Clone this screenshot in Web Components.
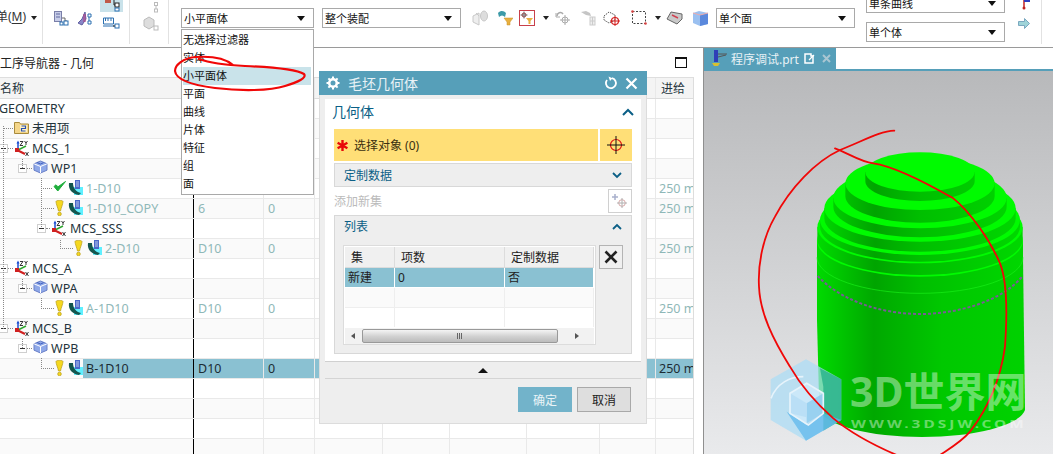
<!DOCTYPE html>
<html lang="zh">
<head>
<meta charset="utf-8">
<title>NX</title>
<style>
  html, body { margin: 0; padding: 0; background: #fff; overflow: hidden; }
  body { font-family: "Noto Sans", "Noto Sans CJK SC", sans-serif; font-size: 12px; }
</style>
</head>
<body>
<nx-app>
  <nx-toolbar slot="toolbar"></nx-toolbar>
  <nav-tree slot="left"></nav-tree>
  <graphics-view slot="right"></graphics-view>
  <filter-menu slot="over"></filter-menu>
  <blank-dialog slot="over"></blank-dialog>
</nx-app>

<script>
const FONT = '"Noto Sans", "Noto Sans CJK SC", sans-serif';

// tree icons
const ICONS = {
  folder: `<svg width="15" height="14" viewBox="0 0 15 14"><path d="M.5 2.500h5l1 1.500h8v9.500H.5z" fill="#f4d68a" stroke="#a98b3c"/><rect x="6" y="5" width="7" height="7" fill="#fff3c4"/><path d="M7.500 6h4v2.500h-4V11h4" fill="none" stroke="#2a4fb0" stroke-width="1.200"/></svg>`,
  mcs: `<svg width="16" height="17" viewBox="0 0 16 17"><path d="M4 11V2" stroke="#1c4fd0" stroke-width="1.500"/><path d="M2.500 3.500 4 .5l1.500 3z" fill="#1c4fd0"/><path d="M4 10l8-4" stroke="#2fa52f" stroke-width="1.500"/><path d="M3 10l8 4" stroke="#d02020" stroke-width="2"/><rect x="1" y="8" width="4" height="4" fill="#d02020"/><path d="M6 1.500h3l-3 4h3M10.500 1l1.500 2 1.500-2M12 3v2M11.500 12l3 4M14.500 12l-3 4" fill="none" stroke="#222" stroke-width=".9"/></svg>`,
  wp: `<svg width="15" height="14" viewBox="0 0 15 14"><path d="M7.500 1 14 3.800v6.400L7.500 13 1 10.200V3.800z" fill="#8fa8e8" stroke="#6a80c8"/><path d="M1 3.800 7.500 6.500 14 3.800M7.500 6.500V13" fill="none" stroke="#fff"/><path d="M4 2.500l3.500 1.500 3-1.300" fill="none" stroke="#3f5fc0"/></svg>`,
  op: `<svg width="15" height="16" viewBox="0 0 15 16"><rect x="6" y="7" width="9" height="8" fill="#5ff0ff"/><rect x="7" y="0" width="5" height="9" fill="#4a66c8"/><path d="M8 2h3M8 4h3M8 6h3" stroke="#b8c8f0"/><path d="M1 3c-1 6 3 11 10 12l2-2C8 12 5 8 5 3z" fill="#14564e"/></svg>`,
  ok: `<svg width="13" height="12" viewBox="0 0 13 12"><path d="M1 6.500 4.800 11 12.500 1.500 5 6.800 3 4.800z" fill="#1fae3c" stroke="#1fae3c"/></svg>`,
  warn: `<svg width="9" height="16" viewBox="0 0 9 16"><path d="M1 1.500C1 0 8 0 8 1.500 8 4 6 8 5.500 11h-2C3 8 1 4 1 1.500z" fill="#f5d820" stroke="#b89b10" stroke-width=".7"/><circle cx="4.500" cy="14" r="1.800" fill="#f5d820" stroke="#b89b10" stroke-width=".7"/></svg>`
};

class NxApp extends HTMLElement {
  constructor() {
    super();
    this.attachShadow({ mode: 'open' });
  }

  connectedCallback() {
    this.shadowRoot.innerHTML = `
      <style>
        :host { display: block; position: relative; width: 1053px; height: 454px; overflow: hidden;
                font-family: ${FONT}; font-size: 12px; color: #222; }
        .main { display: flex; height: 406px; }
        .left { width: 703px; flex: none; }
        .right { flex: 1; min-width: 0; }
        .marks { position: absolute; left: 0; top: 0; pointer-events: none; }
      </style>
      <slot name="toolbar"></slot>
      <div class="main">
        <div class="left"><slot name="left"></slot></div>
        <div class="right"><slot name="right"></slot></div>
      </div>
      <slot name="over"></slot>
      <svg class="marks" width="1053" height="454" fill="none" stroke="#f00707" stroke-width="2.200" stroke-linecap="round">
        <path d="M233 65C226 59 212 56 196 57 183 58 175 65 175 71 176 80 192 85 215 88 240 91 270 91 285 86 298 82 307 78 304 74 296 69 268 67 245 66 226 65 210 63 199 59"/>
      </svg>
    `;
  }
}

class NxCombo extends HTMLElement {
  constructor() {
    super();
    this.attachShadow({ mode: 'open' });
    this.shadowRoot.innerHTML = `
      <style>
        :host { display: flex; align-items: center; box-sizing: border-box; width: 139px; height: 20px; flex: none;
                border: 1px solid #a9a9a9; background: #fff; padding: 0 8px 0 2px; font-size: 11px; color: #111; }
        .t { flex: 1; white-space: nowrap; }
        .a { width: 0; height: 0; border: 4px solid transparent; border-top: 5px solid #111; border-bottom: 0; }
      </style>
      <span class="t"><slot></slot></span><span class="a"></span>
    `;
  }
}

class NxToolbar extends HTMLElement {
  constructor() {
    super();
    this.attachShadow({ mode: 'open' });
  }

  connectedCallback() {
    const arrow = ml => `<span class="arr" style="margin-left:${ml}px"></span>`;
    const sep = (ml, mr) => `<span class="sep" style="margin:0 ${mr}px 0 ${ml}px"></span>`;
    this.shadowRoot.innerHTML = `
      <style>
        :host { display: flex; box-sizing: border-box; height: 48px; border-bottom: 1px solid #9a9a9a;
                background: #fff; overflow: hidden; align-items: flex-start; font-size: 12px; color: #333; }
        .menu { margin: 8px 0 0 -4px; white-space: nowrap; line-height: 18px; }
        .menu u { text-underline-offset: 2px; }
        .arr { flex: none; width: 0; height: 0; margin-top: 16px; border: 3px solid transparent; border-top: 4px solid #222; border-bottom: 0; }
        .sep { flex: none; width: 1px; height: 44px; background: #e2e2e2; }
        svg { flex: none; display: block; }
        .i { margin-top: 10px; }
        .stack { flex: none; display: flex; flex-direction: column; }
        .hi { width: 23px; height: 12px; background: #c9e2ea; overflow: hidden; }
        nx-combo { margin-top: 8px; }
        .combos { flex: none; display: flex; flex-direction: column; gap: 9px; margin: -7px 0 0 11px; }
        .combos nx-combo { margin: 0; }
      </style>
      <span class="menu">单(<u>M</u>)</span>
      ${arrow(5)}
      ${sep(5, 11)}
      <svg class="i" style="margin-top:11px" width="16" height="15" viewBox="0 0 16 15"><rect x=".5" y=".5" width="7" height="10" fill="#c7cde8" stroke="#7a7fa8"/><path d="M2 3h4M2 6h4" stroke="#6068a0"/><path d="M8 7h3v3h2" stroke="#666" fill="none"/><rect x="10" y="10" width="4" height="4" fill="#fff" stroke="#2a6fb0"/><rect x="6" y="11" width="3" height="3" fill="#fff" stroke="#2a6fb0"/></svg>
      <svg class="i" style="margin:11px 0 0 7px" width="17" height="15" viewBox="0 0 17 15"><path d="M1 12 5 8l3-7 1 7-4 6z" fill="#8a86c8" stroke="#6060a0"/><path d="M6 3h3v8H6z" fill="#b04a8a" opacity=".6"/><path d="M11 3h3v3h-3zM11 10h3v3h-3zM12 6v4" fill="#fff" stroke="#2a6fb0"/></svg>
      <div class="stack" style="margin-left:6px;width:23px">
        <div class="hi"><svg width="23" height="12" viewBox="0 0 23 12"><rect x="5" y="-5" width="6" height="8" fill="#c05a4a"/><path d="M14 -1v6h3" stroke="#222" fill="none"/><rect x="15" y="3" width="4" height="4" fill="#fff" stroke="#222"/><rect x="15" y="8" width="4" height="3" fill="#fff" stroke="#2a6fb0"/></svg></div>
        <svg style="margin:3px 0 0 3px" width="17" height="15" viewBox="0 0 17 15"><path d="M.5 3v6h10V3" fill="none" stroke="#2a6fb0"/><path d="M.5 3h10M2.500 3v3M5 3v3M8 3v3M0 11h11" stroke="#2a6fb0" fill="none"/><rect x="12" y="9" width="4" height="4" fill="#fff" stroke="#2a6fb0"/><path d="M10 11h2" stroke="#222"/></svg>
      </div>
      ${sep(6, 11)}
      <div class="stack" style="width:18px;height:46px">
        <svg style="margin:2px 0 0 13px" width="5" height="11" viewBox="0 0 5 11"><rect x=".5" y=".5" width="3" height="3" fill="#fff" stroke="#bbb"/><rect x=".5" y="7" width="3" height="3" fill="#fff" stroke="#bbb"/><path d="M2 4v3" stroke="#bbb"/></svg>
        <svg style="margin:2px 0 0 2px" width="16" height="16" viewBox="0 0 16 16"><path d="M1 5l5-3 5 3v6l-5 3-5-3z" fill="#ddd" stroke="#bbb"/><rect x="11" y="11" width="4" height="4" fill="#fff" stroke="#bbb"/></svg>
      </div>
      ${sep(9, 12)}
      <nx-combo style="width:133px">小平面体</nx-combo>
      <nx-combo style="margin-left:8px">整个装配</nx-combo>
      <svg class="i" style="margin-left:11px" width="16" height="17" viewBox="0 0 16 17"><path d="M1 6l6-3v12l-6-3zM7 6l-3-3" fill="#eee" stroke="#c8c8c8"/><ellipse cx="12" cy="6" rx="3.500" ry="5" fill="#ddd" stroke="#c8c8c8"/></svg>
      <svg class="i" style="margin-left:9px" width="16" height="16" viewBox="0 0 16 16"><path d="M1 3c3-3 6-2 8 0l-1 4C6 5 4 5 2 7z" fill="#3d9aa8"/><path d="M7 8h9l-3 4v3h-3v-3z" fill="#e8b040" stroke="#c8902a" stroke-width=".5"/></svg>
      <svg class="i" style="margin-left:6px" width="16" height="16" viewBox="0 0 16 16"><rect x=".5" y=".5" width="15" height="15" fill="#fff" stroke="#c8404a"/><circle cx="5" cy="5" r="2" fill="none" stroke="#a04040"/><path d="M5 1.500v7M1.500 5h7" stroke="#555" stroke-width=".8"/><path d="M7 8h7l-2.500 3v3h-2v-3z" fill="#e8b040"/></svg>
      ${arrow(8)}
      <svg class="i" style="margin-left:6px" width="16" height="16" viewBox="0 0 16 16"><path d="M2 6c0-3 4-5 6-2" fill="none" stroke="#aaa" stroke-width="1.500"/><path d="M1 3v4h4" fill="none" stroke="#aaa"/><circle cx="10" cy="10" r="3" fill="none" stroke="#aaa"/><path d="M10 5v10M5 10h10" stroke="#aaa"/></svg>
      <svg class="i" style="margin-left:9px" width="17" height="16" viewBox="0 0 17 16"><path d="M1 2l5-1 4 2 1 3-5-1z" fill="#c5c5c5"/><rect x="10" y="7" width="5" height="8" fill="#eee" stroke="#ccc"/><path d="M10 11h5M12.500 7v8" stroke="#ccc"/></svg>
      <svg class="i" style="margin-left:6px" width="18" height="17" viewBox="0 0 18 17"><path d="M1 6l5-4 6 3v5l-6 3-5-3z" fill="#fff" stroke="#555" stroke-dasharray="1.500 1"/><circle cx="12" cy="11" r="3.500" fill="none" stroke="#d42020" stroke-width="1.200"/><path d="M12 6v10M7 11h10" stroke="#d42020"/></svg>
      <svg class="i" style="margin-left:10px" width="16" height="16" viewBox="0 0 16 16"><rect x="1.500" y="1.500" width="13" height="12" fill="none" stroke="#444" stroke-dasharray="2 1.500"/><circle cx="1.500" cy="1.500" r="1.300" fill="#d84040"/><circle cx="14.500" cy="13.500" r="1.300" fill="#d84040"/></svg>
      ${arrow(8)}
      <svg class="i" style="margin-left:5px" width="17" height="15" viewBox="0 0 17 15"><path d="M1 9l4-7 11 2v5l-5 5z" fill="#c9c9c9" stroke="#666"/><path d="M6 5l6 3" stroke="#d04050" stroke-width="1.500"/></svg>
      <svg class="i" style="margin-left:9px" width="17" height="16" viewBox="0 0 17 16"><path d="M1 3l6-2 9 2v11l-8 2-7-3z" fill="#9bc0f0"/><path d="M8 5l8-2v11l-8 2z" fill="#5a88dc"/><path d="M1 3l7 2 8-2" fill="none" stroke="#eaa"/></svg>
      <nx-combo style="margin-left:7px">单个面</nx-combo>
      <div class="combos">
        <nx-combo>单条曲线</nx-combo>
        <nx-combo>单个体</nx-combo>
      </div>
      <div class="stack" style="margin-left:13px;width:12px">
        <svg style="margin-top:-1px;margin-left:4px" width="8" height="11" viewBox="0 0 8 11"><path d="M2 0v9" stroke="#c02020" stroke-width="1.500"/><path d="M2 0h6v3H2z" fill="#2f3fc0"/><circle cx="2" cy="9" r="1.500" fill="#c02020"/></svg>
        <svg style="margin-top:8px" width="12" height="11" viewBox="0 0 12 11"><path d="M.5 3.500h6V.5l5 5-5 5v-3h-6z" fill="#9fd4d8" stroke="#7aa8c0"/></svg>
      </div>
      <span class="sep" style="margin-left:11px"></span>
    `;
  }
}

class NavTree extends HTMLElement {
  constructor() {
    super();
    this.attachShadow({ mode: 'open' });
  }

  connectedCallback() {
    const rows = [
      { t: 'GEOMETRY', x: -1 },
      { t: '未用项', x: 32, icon: 'folder', ix: 14 },
      { t: 'MCS_1', x: 32, icon: 'mcs', ix: 14, ex: -1 },
      { t: 'WP1', x: 51, icon: 'wp', ix: 33, ex: 18 },
      { t: '1-D10', x: 86, icon: 'op', ix: 68, st: 'ok', sx: 53, dim: 1, feed: 1 },
      { t: '1-D10_COPY', x: 86, icon: 'op', ix: 68, st: 'warn', sx: 55, dim: 1, a: '6', b: '0', feed: 1 },
      { t: 'MCS_SSS', x: 70, icon: 'mcs', ix: 51, ex: 37 },
      { t: '2-D10', x: 105, icon: 'op', ix: 87, st: 'warn', sx: 74, dim: 1, a: 'D10', b: '0', feed: 1 },
      { t: 'MCS_A', x: 32, icon: 'mcs', ix: 14, ex: -1 },
      { t: 'WPA', x: 51, icon: 'wp', ix: 33, ex: 18 },
      { t: 'A-1D10', x: 86, icon: 'op', ix: 68, st: 'warn', sx: 55, dim: 1, a: 'D10', b: '0', feed: 1 },
      { t: 'MCS_B', x: 32, icon: 'mcs', ix: 14, ex: -1 },
      { t: 'WPB', x: 51, icon: 'wp', ix: 33, ex: 18 },
      { t: 'B-1D10', x: 86, icon: 'op', ix: 68, st: 'warn', sx: 55, sel: 1, a: 'D10', b: '0', feed: 1 }
    ];
    while (rows.length < 18) rows.push({});

    const name = r => {
      if (!r.t) return '';
      let h = '';
      if (r.ex !== undefined) h += `<span class="ex" style="left:${r.ex}px"></span><span class="dh" style="left:${r.ex + 9}px;width:${r.ix - r.ex - 10}px"></span>`;
      if (r.st) {
        h += `<span class="dh" style="left:${r.sx - 12}px;width:11px"></span><span class="ic" style="left:${r.sx}px">${ICONS[r.st]}</span>`;
      } else if (r.t === '未用项') {
        h += `<span class="dh" style="left:3px;width:10px"></span>`;
      }
      if (r.icon) h += `<span class="ic" style="left:${r.ix}px">${ICONS[r.icon]}</span>`;
      h += `<span class="lbl" style="left:${r.x}px">${r.t}</span>`;
      return h;
    };

    const body = rows.map((r, i) => `
      <div class="row${i % 2 ? ' alt' : ''}${r.sel ? ' sel' : ''}${r.dim ? ' dim' : ''}">
        <div class="c name">${name(r)}</div>
        <div class="c">${r.a || ''}</div>
        <div class="c">${r.b || ''}</div>
        <div class="c"></div><div class="c"></div><div class="c"></div><div class="c"></div><div class="c"></div>
        <div class="c feed">${r.feed ? '250 m' : ''}</div>
      </div>`).join('');

    this.shadowRoot.innerHTML = `
      <style>
        :host { display: block; height: 406px; overflow: hidden; background: #fff; font-size: 12px; }
        .title { display: flex; align-items: center; justify-content: space-between; height: 29px;
                 padding-right: 16px; color: #222; }
        .win { width: 10px; height: 8px; border: 1px solid #111; border-top-width: 2px; }
        .grid { position: relative; width: 693px; border-right: 1px solid #ddd; }
        .row { display: grid; height: 20px; box-sizing: border-box; border-bottom: 1px solid #e9e9e9; line-height: 19px; font-size: 12.500px;
               grid-template-columns: 194px 70px 51px 68px 67px 77px 73px 56px 37px; background: #fff; color: #24343c; }
        .row.alt { background: #fafafa; }
        .row.head { height: 22px; line-height: 21px; font-size: 12px; background: #f4f4f4; border-top: 1px solid #dedede; border-bottom: 1px solid #dcdcdc; }
        .row.dim { color: #8fb8b8; }
        .row.sel .c { background: #8ac1d2; color: #1c2c34; }
        .row.sel .name { background: linear-gradient(90deg, transparent 83px, #8ac1d2 83px); }
        .c { position: relative; box-sizing: border-box; border-right: 1px solid #e9e9e9; padding-left: 4px; white-space: nowrap; overflow: hidden; }
        .name { border-right: 1px solid #000; padding: 0; overflow: visible; }
        .feed { padding-left: 3px; border-right: 0; }
        .row.sel .feed { border: 0; }
        .lbl { position: absolute; top: 0; white-space: nowrap; }
        .ic { position: absolute; top: 1px; line-height: 0; }
        .ex { position: absolute; top: 5px; width: 9px; height: 9px; box-sizing: border-box; border: 1px solid #cfcfcf;
              background: linear-gradient(#333, #333) center / 5px 1px no-repeat #fff; }
        .dh { position: absolute; top: 9px; border-top: 1px dotted #888; }
        .lines { position: absolute; left: 0; top: 0; pointer-events: none; }
      </style>
      <div class="title"><span>工序导航器 - 几何</span><span class="win"></span></div>
      <div class="grid">
        <div class="row head">
          <div class="c name"><span class="lbl" style="left:0">名称</span></div>
          <div class="c"></div><div class="c"></div><div class="c"></div><div class="c"></div><div class="c"></div><div class="c"></div><div class="c"></div>
          <div class="c feed" style="padding-left:5px">进给</div>
        </div>
        ${body}
        <svg class="lines" width="193" height="300" fill="none" stroke="#888" stroke-dasharray="1 1">
          <path d="M3.500 49V252M22.500 82V92M22.500 202V212M22.500 262V272M41.500 101V151M60.500 163V172M41.500 221V232M41.500 281V292"/>
        </svg>
      </div>
    `;
  }
}

class FilterMenu extends HTMLElement {
  constructor() {
    super();
    this.attachShadow({ mode: 'open' });
    const items = ['无选择过滤器', '实体', '小平面体', '平面', '曲线', '片体', '特征', '组', '面'];
    this.shadowRoot.innerHTML = `
      <style>
        :host { display: block; position: absolute; left: 181px; top: 29px; width: 133px; box-sizing: border-box;
                height: 166px; border: 1px solid #a9a9a9; background: #fff; padding: 1px; font-size: 11px; color: #111; }
        div { height: 18px; line-height: 18px; padding-left: 0; white-space: nowrap; }
        .on { background: #c9e3ea; margin-right: 1px; }
      </style>
      ${items.map(t => `<div class="${t === '小平面体' ? 'on' : ''}">${t}</div>`).join('')}
    `;
  }
}

class BlankDialog extends HTMLElement {
  constructor() {
    super();
    this.attachShadow({ mode: 'open' });
    const tr = (a, b, c, cls) => `<div class="tr ${cls}"><span>${a}</span><span>${b}</span><span>${c}</span></div>`;
    this.shadowRoot.innerHTML = `
      <style>
        :host { display: block; position: absolute; left: 319px; top: 71px; width: 328px; height: 353px; box-sizing: border-box;
                background: #eee; border: 1px solid #dcdcdc; border-top: 0; font-size: 12px; color: #222; }
        .bar { display: flex; align-items: center; height: 24px; margin: 0 -1px; background: #569fb9; color: #e8f2f6; font-size: 14px; padding: 0 9px 0 7px; }
        .bar .name { flex: 1; margin-left: 8px; }
        .bar svg { display: block; }
        .body { box-sizing: border-box; height: 263px; margin: 4px 5px 0; background: #fff; padding: 0 9px; border-bottom: 1px solid #d0d0d0; }
        .h1 { display: flex; align-items: center; justify-content: space-between; height: 26px; line-height: 24px; color: #0b5f86; font-size: 14px; margin: 0 -2px 4px -2px; }
        .sel { display: flex; gap: 2px; height: 32px; }
        .sel .f { flex: 1; display: flex; align-items: center; background: #ffdf77; padding-left: 3px; color: #3a3010; }
        .sel .b { width: 32px; display: flex; align-items: center; justify-content: center; background: #ffdf77; }
        .sel .f svg { margin-right: 6px; display: block; }
        .group { display: flex; align-items: center; justify-content: space-between; height: 24px; box-sizing: border-box; margin-top: 2px;
                 background: #eee; border: 1px solid #d8d8d8; padding: 0 9px; color: #0b5f86; }
        .add { display: flex; align-items: center; justify-content: space-between; height: 24px; margin-top: 2px; color: #bbb; }
        .add .b { width: 24px; height: 24px; box-sizing: border-box; border: 1px solid #d0d0d0; display: flex; align-items: center; justify-content: center; }
        .list { box-sizing: border-box; height: 139px; margin-top: 2px; background: #eee; border: 1px solid #d8d8d8; padding: 0 8px; }
        .list .head { display: flex; align-items: center; justify-content: space-between; height: 20px; color: #0b5f86; padding: 0 1px; }
        .wrap { display: flex; gap: 3px; margin-top: 9px; align-items: flex-start; }
        .table { box-sizing: border-box; width: 253px; height: 100px; border: 1px solid #dcdcdc; background: #fff; padding: 1px; }
        .tr { display: grid; grid-template-columns: 50px 110px 1fr; height: 20px; line-height: 19px; background: #fff; border-bottom: 1px solid #eee; box-sizing: border-box; }
        .tr span { border-right: 1px solid #eee; padding-left: 3px; }
        .tr.th { height: 21px; line-height: 21px; background: #f0f0f0; border-bottom: 1px solid #dcdcdc; }
        .tr.th span { padding-left: 6px; border-right: 1px solid #dcdcdc; }
        .tr.on { background: #8ac1d2; border-bottom: 1px solid #fff; }
        .tr.on span { border-right: 1px solid #fff; }
        .tr.alt { background: #fafafa; }
        .tr.last { height: 19px; border: 0; }
        .scroll { display: flex; align-items: center; height: 16px; background: #f2f2f2; margin-top: 1px; }
        .scroll .l, .scroll .r { width: 0; height: 0; border: 3.500px solid transparent; }
        .scroll .l { border-right: 4px solid #555; margin-left: 3px; }
        .scroll .r { border-left: 4px solid #555; margin-left: 17px; }
        .scroll .thumb { width: 196px; height: 14px; box-sizing: border-box; margin-left: 7px; border: 1px solid #999; border-radius: 2px;
                         background: linear-gradient(#f4f4f4, #d0d0d0 55%, #bcbcbc); display: flex; align-items: center; justify-content: center; }
        .scroll .grip { width: 6px; height: 6px; background: repeating-linear-gradient(90deg, #666 0 1px, transparent 1px 2px); }
        .x { width: 24px; height: 24px; box-sizing: border-box; border: 1px solid #b4b4b4; display: flex; align-items: center; justify-content: center; background: #f0f0f0; }
        .toggle { display: flex; align-items: center; justify-content: center; height: 16px; margin: 0 5px; border-bottom: 1px solid #d4d4d4; }
        .toggle i { width: 0; height: 0; border: 5px solid transparent; border-bottom: 5px solid #111; border-top: 0; }
        .foot { display: flex; justify-content: flex-end; gap: 5px; padding: 8px 15px 0 0; }
        .btn { box-sizing: border-box; width: 54px; height: 25px; display: flex; align-items: center; justify-content: center; }
        .ok { background: #72b3ca; color: #eaf4f7; }
        .cancel { background: #dedede; border: 1px solid #a9a9a9; color: #222; }
      </style>
      <div class="bar">
        <svg width="14" height="14" viewBox="0 0 14 14"><circle cx="7" cy="7" r="3.800" fill="none" stroke="#fff" stroke-width="2.600"/><path d="M7 .5v2.500M7 11v2.500M.5 7H3M11 7h2.500M2.400 2.400l1.800 1.800M9.800 9.800l1.800 1.800M11.600 2.400 9.800 4.200M4.200 9.800l-1.800 1.800" stroke="#fff" stroke-width="2"/></svg>
        <span class="name">毛坯几何体</span>
        <svg width="14" height="14" viewBox="0 0 14 14" style="margin-right:7px"><path d="M8 2.200A5 5 0 1 1 3 4" fill="none" stroke="#fff" stroke-width="1.800"/><path d="M4.500 .5 8.500 2.200 6 5z" fill="#fff"/></svg>
        <svg width="13" height="13" viewBox="0 0 13 13"><path d="M1.500 1.500l10 10M11.500 1.500l-10 10" stroke="#fff" stroke-width="2.200"/></svg>
      </div>
      <div class="body">
        <div class="h1"><span>几何体</span><svg width="12" height="8" viewBox="0 0 12 8"><path d="M1 7l5-5 5 5" fill="none" stroke="#0b5f86" stroke-width="2"/></svg></div>
        <div class="sel">
          <div class="f"><svg width="11" height="11" viewBox="0 0 11 11"><path d="M5.500 0v11M.6 2.700l9.800 5.600M10.400 2.700.6 8.300" stroke="#e80808" stroke-width="2.400"/></svg>选择对象 (0)</div>
          <div class="b"><svg width="20" height="20" viewBox="0 0 20 20"><circle cx="10" cy="10" r="5.500" fill="none" stroke="#e01010" stroke-width="1.200"/><path d="M10 1v18M1 10h18" stroke="#111"/></svg></div>
        </div>
        <div class="group"><span>定制数据</span><svg width="10" height="7" viewBox="0 0 10 7"><path d="M1 1l4 4 4-4" fill="none" stroke="#0b5f86" stroke-width="1.800"/></svg></div>
        <div class="add"><span>添加新集</span><span class="b"><svg width="16" height="16" viewBox="0 0 16 16"><path d="M3 1v6M0 4h6" stroke="#a8b0cc" stroke-width="1.500"/><circle cx="10" cy="10" r="3.300" fill="none" stroke="#d8a8a8"/><path d="M10 5v10M5 10h10" stroke="#b0b0b0"/></svg></span></div>
        <div class="list">
          <div class="head"><span>列表</span><svg width="10" height="7" viewBox="0 0 10 7"><path d="M1 6l4-4 4 4" fill="none" stroke="#0b5f86" stroke-width="1.800"/></svg></div>
          <div class="wrap">
            <div class="table">
              ${tr('集', '项数', '定制数据', 'th')}
              ${tr('新建', '0', '否', 'on')}
              ${tr('', '', '', 'alt')}
              ${tr('', '', '', 'last')}
              <div class="scroll"><span class="l"></span><span class="thumb"><span class="grip"></span></span><span class="r"></span></div>
            </div>
            <span class="x"><svg width="14" height="14" viewBox="0 0 14 14"><path d="M1.500 1.500l11 11M12.500 1.500l-11 11" stroke="#222" stroke-width="2.600"/></svg></span>
          </div>
        </div>
      </div>
      <div class="toggle"><i></i></div>
      <div class="foot"><span class="btn ok">确定</span><span class="btn cancel">取消</span></div>
    `;
  }
}

class GraphicsView extends HTMLElement {
  constructor() {
    super();
    this.attachShadow({ mode: 'open' });
  }

  tier(rx, cy, ry, h) {
    const cx = 540;
    return `<path d="M${cx - rx} ${cy}v${h}a${rx} ${ry} 0 0 0 ${rx * 2} 0v${-h}z" fill="url(#side)"/>
      <ellipse cx="${cx}" cy="${cy}" rx="${rx}" ry="${ry}" fill="#00fb00"/>`;
  }

  connectedCallback() {
    // tiers bottom to top: rx, cy, ry, side height, measured on a 3x crop of the part
    const tiers = [
      [309, 362, 108, 50], [308, 322, 108, 35], [300, 300, 105, 20], [287, 265, 100, 30],
      [260, 233, 92, 27], [224, 190, 80, 38], [164, 156, 59, 28]
    ];
    this.shadowRoot.innerHTML = `
      <style>
        :host { display: flex; flex-direction: column; height: 406px; background: #fff; border-left: 1px solid #8f8f8f; box-sizing: border-box; }
        .tabs { display: flex; height: 21px; flex: none; }
        .tab { display: flex; align-items: center; width: 132px; background: #569fb9; color: #e8f2f6; font-size: 12px; padding-left: 7px; box-sizing: border-box; }
        .tab svg { display: block; flex: none; }
        .tab .n { margin: 0 5px 0 4px; white-space: nowrap; }
        .strip { height: 2px; flex: none; background: #569fb9; }
        .view { position: relative; flex: 1; overflow: hidden; background: linear-gradient(#b8b9bb, #e9eaec); }
        .part { position: absolute; left: 0; top: 0; }
        .wm { position: absolute; left: 146px; top: 300px; font: 700 41px/40px "Noto Sans", "Noto Sans CJK SC", sans-serif;
              color: rgba(255,255,255,.42); white-space: nowrap; }
        .wm2 { position: absolute; left: 147px; top: 347px; font: 700 11px/12px "Noto Sans", sans-serif; letter-spacing: 2.200px;
               color: rgba(255,255,255,.42); white-space: nowrap; transform: scaleX(1.400); transform-origin: 0 0; }
      </style>
      <div class="tabs">
        <div class="tab">
          <svg width="16" height="17" viewBox="0 0 16 17"><rect x="3" y="0" width="4" height="12" fill="#2f3fb8"/><path d="M7 4h9M7 7l8-2" stroke="#555"/><path d="M1 13h8l-2 3H3z" fill="#d8c030"/></svg>
          <span class="n">程序调试.prt</span>
          <svg width="11" height="11" viewBox="0 0 11 11"><path d="M1 1h6v2h2v7H1z" fill="none" stroke="#fff" stroke-width="1.500"/><path d="M5 7l5-5" stroke="#fff" stroke-width="1.300"/></svg>
          <svg style="margin-left:7px" width="9" height="9" viewBox="0 0 9 9"><path d="M1 1l7 7M8 1 1 8" stroke="#a9c6d2" stroke-width="2"/></svg>
        </div>
      </div>
      <div class="strip"></div>
      <div class="view">
        <svg class="part" width="349" height="383" viewBox="704 71 349 383">
          <defs>
            <linearGradient id="side" gradientUnits="userSpaceOnUse" x1="230" x2="855" y1="0" y2="0">
              <stop offset="0" stop-color="#00dc00"/><stop offset=".28" stop-color="#00a400"/>
              <stop offset=".5" stop-color="#00bf00"/><stop offset="1" stop-color="#00d800"/>
            </linearGradient>
            <linearGradient id="body" gradientUnits="userSpaceOnUse" x1="233" x2="855" y1="0" y2="0">
              <stop offset="0" stop-color="#00da00"/><stop offset=".27" stop-color="#00a800"/>
              <stop offset=".6" stop-color="#00c800"/><stop offset="1" stop-color="#00d200"/>
            </linearGradient>
          </defs>
          <g transform="translate(740 120) scale(.33333)">
            <path d="M231 412V600L238 870A310 90 0 0 0 855 870L849 412z" fill="url(#body)"/>
            ${tiers.map(t => this.tier(...t)).join('')}
            <path d="M231 412a309 108 0 0 0 618 0" fill="none" stroke="#19f019" stroke-width="2"/>
            <path d="M233 468C300 540 420 582 540 582S790 540 848 468" fill="none" stroke="#7a5a98" stroke-width="6" stroke-dasharray="9 6"/>
            <!-- watermark logo -->
            <g>
              <path d="M198 718 304 778V900L198 962 92 900V778z" fill="#aadcf5" opacity=".72"/>
              <path d="M240 745 304 778V900L250 932V800z" fill="#00a078" opacity=".55"/>
              <path d="M150 820 200 790 250 820V880L200 910 150 880z" fill="#cfeafb" opacity=".8"/>
              <path d="M200 850 250 820V880L200 910z" fill="#8ccbee" opacity=".8"/>
              <path d="M150 820 200 850V892L150 880z" fill="#b8def5" opacity=".9"/>
              <path d="M140 875 198 962 304 900 250 880 200 915z" fill="#5fb8ec" opacity=".75"/>
              <path d="M93 835C110 790 150 770 190 770M150 820V880L205 915 250 880V820L200 790z" fill="none" stroke="#e6f3fb" stroke-width="5"/>
            </g>
            <g fill="none" stroke="#f00707" stroke-width="5.400" stroke-linecap="round">
              <path d="M463 32C420 33 365 65 300 90 225 125 150 205 105 290 70 350 53 430 57 500 60 580 100 660 150 740 190 810 240 860 280 895 340 945 400 975 470 1005"/>
              <path d="M285 85C320 97 360 125 400 130 470 140 570 195 640 235 690 275 750 360 780 430 800 480 802 580 795 680 780 790 740 870 690 935 665 965 630 985 600 1005"/>
            </g>
          </g>
        </svg>
        <span class="wm">3D世界网</span>
        <span class="wm2">WWW.3DSJW.COM</span>
      </div>
    `;
  }
}

customElements.define('nx-app', NxApp);
customElements.define('nx-combo', NxCombo);
customElements.define('nx-toolbar', NxToolbar);
customElements.define('nav-tree', NavTree);
customElements.define('filter-menu', FilterMenu);
customElements.define('blank-dialog', BlankDialog);
customElements.define('graphics-view', GraphicsView);
</script>
</body>
</html>
